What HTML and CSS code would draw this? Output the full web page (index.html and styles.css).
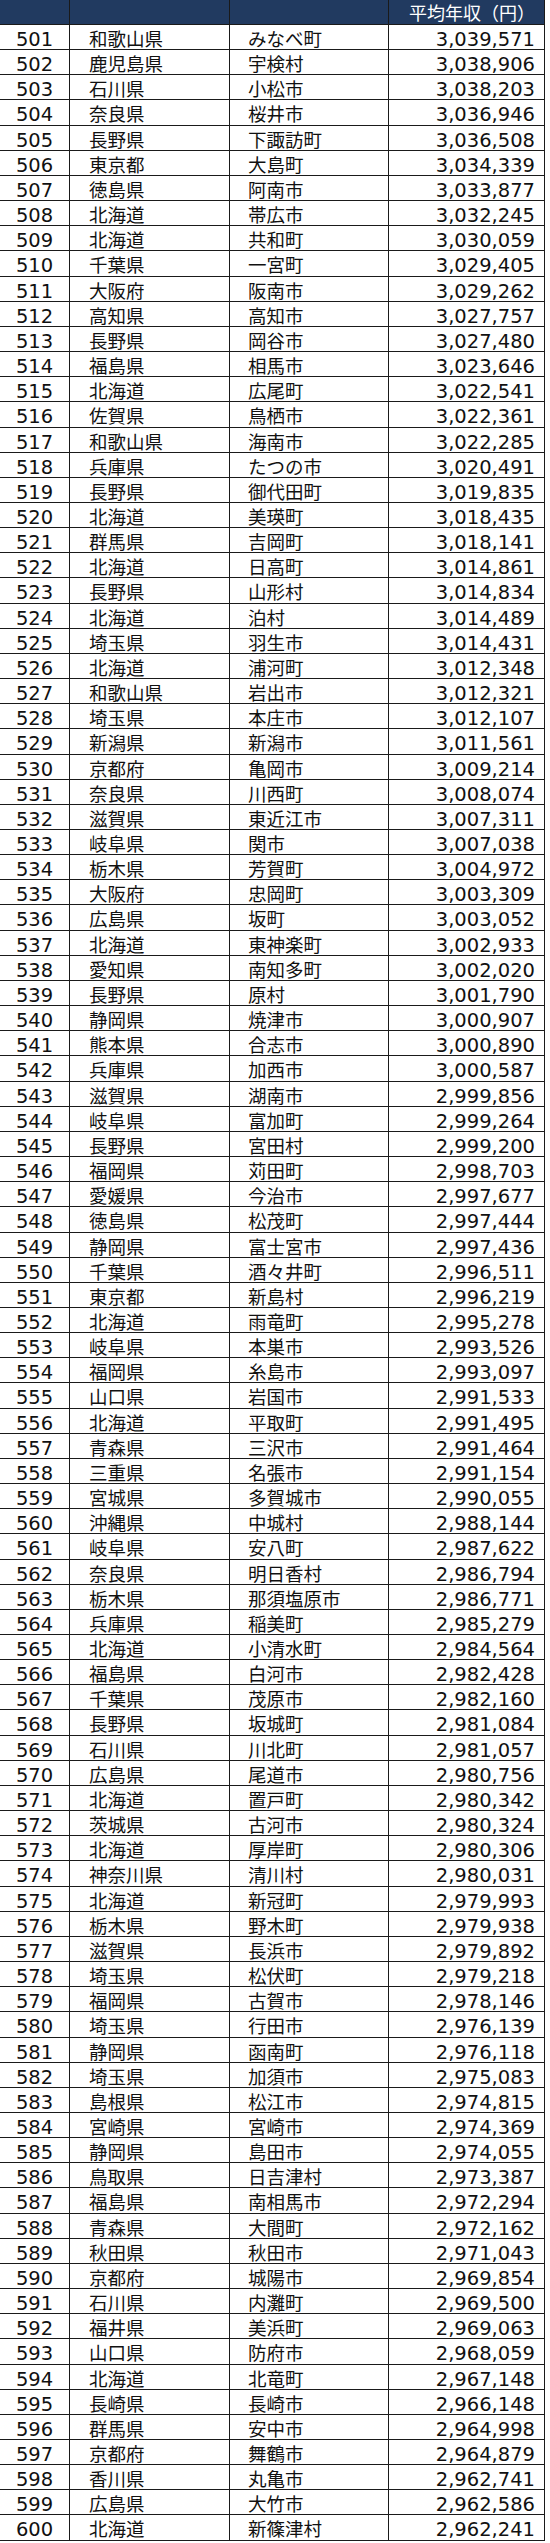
FILE: index.html
```html
<!DOCTYPE html>
<html lang="ja">
<head>
<meta charset="utf-8">
<title>平均年収ランキング 501〜600位</title>
<link rel="stylesheet" href="styles.css">
</head>
<body>
<div class="table">
<div class="row head"><span class="c rank"></span><span class="c pref"></span><span class="c city"></span><span class="c val">平均年収（円）</span></div>
<div class="row"><span class="c rank">501</span><span class="c pref">和歌山県</span><span class="c city">みなべ町</span><span class="c val">3,039,571</span></div>
<div class="row"><span class="c rank">502</span><span class="c pref">鹿児島県</span><span class="c city">宇検村</span><span class="c val">3,038,906</span></div>
<div class="row"><span class="c rank">503</span><span class="c pref">石川県</span><span class="c city">小松市</span><span class="c val">3,038,203</span></div>
<div class="row"><span class="c rank">504</span><span class="c pref">奈良県</span><span class="c city">桜井市</span><span class="c val">3,036,946</span></div>
<div class="row"><span class="c rank">505</span><span class="c pref">長野県</span><span class="c city">下諏訪町</span><span class="c val">3,036,508</span></div>
<div class="row"><span class="c rank">506</span><span class="c pref">東京都</span><span class="c city">大島町</span><span class="c val">3,034,339</span></div>
<div class="row"><span class="c rank">507</span><span class="c pref">徳島県</span><span class="c city">阿南市</span><span class="c val">3,033,877</span></div>
<div class="row"><span class="c rank">508</span><span class="c pref">北海道</span><span class="c city">帯広市</span><span class="c val">3,032,245</span></div>
<div class="row"><span class="c rank">509</span><span class="c pref">北海道</span><span class="c city">共和町</span><span class="c val">3,030,059</span></div>
<div class="row"><span class="c rank">510</span><span class="c pref">千葉県</span><span class="c city">一宮町</span><span class="c val">3,029,405</span></div>
<div class="row"><span class="c rank">511</span><span class="c pref">大阪府</span><span class="c city">阪南市</span><span class="c val">3,029,262</span></div>
<div class="row"><span class="c rank">512</span><span class="c pref">高知県</span><span class="c city">高知市</span><span class="c val">3,027,757</span></div>
<div class="row"><span class="c rank">513</span><span class="c pref">長野県</span><span class="c city">岡谷市</span><span class="c val">3,027,480</span></div>
<div class="row"><span class="c rank">514</span><span class="c pref">福島県</span><span class="c city">相馬市</span><span class="c val">3,023,646</span></div>
<div class="row"><span class="c rank">515</span><span class="c pref">北海道</span><span class="c city">広尾町</span><span class="c val">3,022,541</span></div>
<div class="row"><span class="c rank">516</span><span class="c pref">佐賀県</span><span class="c city">鳥栖市</span><span class="c val">3,022,361</span></div>
<div class="row"><span class="c rank">517</span><span class="c pref">和歌山県</span><span class="c city">海南市</span><span class="c val">3,022,285</span></div>
<div class="row"><span class="c rank">518</span><span class="c pref">兵庫県</span><span class="c city">たつの市</span><span class="c val">3,020,491</span></div>
<div class="row"><span class="c rank">519</span><span class="c pref">長野県</span><span class="c city">御代田町</span><span class="c val">3,019,835</span></div>
<div class="row"><span class="c rank">520</span><span class="c pref">北海道</span><span class="c city">美瑛町</span><span class="c val">3,018,435</span></div>
<div class="row"><span class="c rank">521</span><span class="c pref">群馬県</span><span class="c city">吉岡町</span><span class="c val">3,018,141</span></div>
<div class="row"><span class="c rank">522</span><span class="c pref">北海道</span><span class="c city">日高町</span><span class="c val">3,014,861</span></div>
<div class="row"><span class="c rank">523</span><span class="c pref">長野県</span><span class="c city">山形村</span><span class="c val">3,014,834</span></div>
<div class="row"><span class="c rank">524</span><span class="c pref">北海道</span><span class="c city">泊村</span><span class="c val">3,014,489</span></div>
<div class="row"><span class="c rank">525</span><span class="c pref">埼玉県</span><span class="c city">羽生市</span><span class="c val">3,014,431</span></div>
<div class="row"><span class="c rank">526</span><span class="c pref">北海道</span><span class="c city">浦河町</span><span class="c val">3,012,348</span></div>
<div class="row"><span class="c rank">527</span><span class="c pref">和歌山県</span><span class="c city">岩出市</span><span class="c val">3,012,321</span></div>
<div class="row"><span class="c rank">528</span><span class="c pref">埼玉県</span><span class="c city">本庄市</span><span class="c val">3,012,107</span></div>
<div class="row"><span class="c rank">529</span><span class="c pref">新潟県</span><span class="c city">新潟市</span><span class="c val">3,011,561</span></div>
<div class="row"><span class="c rank">530</span><span class="c pref">京都府</span><span class="c city">亀岡市</span><span class="c val">3,009,214</span></div>
<div class="row"><span class="c rank">531</span><span class="c pref">奈良県</span><span class="c city">川西町</span><span class="c val">3,008,074</span></div>
<div class="row"><span class="c rank">532</span><span class="c pref">滋賀県</span><span class="c city">東近江市</span><span class="c val">3,007,311</span></div>
<div class="row"><span class="c rank">533</span><span class="c pref">岐阜県</span><span class="c city">関市</span><span class="c val">3,007,038</span></div>
<div class="row"><span class="c rank">534</span><span class="c pref">栃木県</span><span class="c city">芳賀町</span><span class="c val">3,004,972</span></div>
<div class="row"><span class="c rank">535</span><span class="c pref">大阪府</span><span class="c city">忠岡町</span><span class="c val">3,003,309</span></div>
<div class="row"><span class="c rank">536</span><span class="c pref">広島県</span><span class="c city">坂町</span><span class="c val">3,003,052</span></div>
<div class="row"><span class="c rank">537</span><span class="c pref">北海道</span><span class="c city">東神楽町</span><span class="c val">3,002,933</span></div>
<div class="row"><span class="c rank">538</span><span class="c pref">愛知県</span><span class="c city">南知多町</span><span class="c val">3,002,020</span></div>
<div class="row"><span class="c rank">539</span><span class="c pref">長野県</span><span class="c city">原村</span><span class="c val">3,001,790</span></div>
<div class="row"><span class="c rank">540</span><span class="c pref">静岡県</span><span class="c city">焼津市</span><span class="c val">3,000,907</span></div>
<div class="row"><span class="c rank">541</span><span class="c pref">熊本県</span><span class="c city">合志市</span><span class="c val">3,000,890</span></div>
<div class="row"><span class="c rank">542</span><span class="c pref">兵庫県</span><span class="c city">加西市</span><span class="c val">3,000,587</span></div>
<div class="row"><span class="c rank">543</span><span class="c pref">滋賀県</span><span class="c city">湖南市</span><span class="c val">2,999,856</span></div>
<div class="row"><span class="c rank">544</span><span class="c pref">岐阜県</span><span class="c city">富加町</span><span class="c val">2,999,264</span></div>
<div class="row"><span class="c rank">545</span><span class="c pref">長野県</span><span class="c city">宮田村</span><span class="c val">2,999,200</span></div>
<div class="row"><span class="c rank">546</span><span class="c pref">福岡県</span><span class="c city">苅田町</span><span class="c val">2,998,703</span></div>
<div class="row"><span class="c rank">547</span><span class="c pref">愛媛県</span><span class="c city">今治市</span><span class="c val">2,997,677</span></div>
<div class="row"><span class="c rank">548</span><span class="c pref">徳島県</span><span class="c city">松茂町</span><span class="c val">2,997,444</span></div>
<div class="row"><span class="c rank">549</span><span class="c pref">静岡県</span><span class="c city">富士宮市</span><span class="c val">2,997,436</span></div>
<div class="row"><span class="c rank">550</span><span class="c pref">千葉県</span><span class="c city">酒々井町</span><span class="c val">2,996,511</span></div>
<div class="row"><span class="c rank">551</span><span class="c pref">東京都</span><span class="c city">新島村</span><span class="c val">2,996,219</span></div>
<div class="row"><span class="c rank">552</span><span class="c pref">北海道</span><span class="c city">雨竜町</span><span class="c val">2,995,278</span></div>
<div class="row"><span class="c rank">553</span><span class="c pref">岐阜県</span><span class="c city">本巣市</span><span class="c val">2,993,526</span></div>
<div class="row"><span class="c rank">554</span><span class="c pref">福岡県</span><span class="c city">糸島市</span><span class="c val">2,993,097</span></div>
<div class="row"><span class="c rank">555</span><span class="c pref">山口県</span><span class="c city">岩国市</span><span class="c val">2,991,533</span></div>
<div class="row"><span class="c rank">556</span><span class="c pref">北海道</span><span class="c city">平取町</span><span class="c val">2,991,495</span></div>
<div class="row"><span class="c rank">557</span><span class="c pref">青森県</span><span class="c city">三沢市</span><span class="c val">2,991,464</span></div>
<div class="row"><span class="c rank">558</span><span class="c pref">三重県</span><span class="c city">名張市</span><span class="c val">2,991,154</span></div>
<div class="row"><span class="c rank">559</span><span class="c pref">宮城県</span><span class="c city">多賀城市</span><span class="c val">2,990,055</span></div>
<div class="row"><span class="c rank">560</span><span class="c pref">沖縄県</span><span class="c city">中城村</span><span class="c val">2,988,144</span></div>
<div class="row"><span class="c rank">561</span><span class="c pref">岐阜県</span><span class="c city">安八町</span><span class="c val">2,987,622</span></div>
<div class="row"><span class="c rank">562</span><span class="c pref">奈良県</span><span class="c city">明日香村</span><span class="c val">2,986,794</span></div>
<div class="row"><span class="c rank">563</span><span class="c pref">栃木県</span><span class="c city">那須塩原市</span><span class="c val">2,986,771</span></div>
<div class="row"><span class="c rank">564</span><span class="c pref">兵庫県</span><span class="c city">稲美町</span><span class="c val">2,985,279</span></div>
<div class="row"><span class="c rank">565</span><span class="c pref">北海道</span><span class="c city">小清水町</span><span class="c val">2,984,564</span></div>
<div class="row"><span class="c rank">566</span><span class="c pref">福島県</span><span class="c city">白河市</span><span class="c val">2,982,428</span></div>
<div class="row"><span class="c rank">567</span><span class="c pref">千葉県</span><span class="c city">茂原市</span><span class="c val">2,982,160</span></div>
<div class="row"><span class="c rank">568</span><span class="c pref">長野県</span><span class="c city">坂城町</span><span class="c val">2,981,084</span></div>
<div class="row"><span class="c rank">569</span><span class="c pref">石川県</span><span class="c city">川北町</span><span class="c val">2,981,057</span></div>
<div class="row"><span class="c rank">570</span><span class="c pref">広島県</span><span class="c city">尾道市</span><span class="c val">2,980,756</span></div>
<div class="row"><span class="c rank">571</span><span class="c pref">北海道</span><span class="c city">置戸町</span><span class="c val">2,980,342</span></div>
<div class="row"><span class="c rank">572</span><span class="c pref">茨城県</span><span class="c city">古河市</span><span class="c val">2,980,324</span></div>
<div class="row"><span class="c rank">573</span><span class="c pref">北海道</span><span class="c city">厚岸町</span><span class="c val">2,980,306</span></div>
<div class="row"><span class="c rank">574</span><span class="c pref">神奈川県</span><span class="c city">清川村</span><span class="c val">2,980,031</span></div>
<div class="row"><span class="c rank">575</span><span class="c pref">北海道</span><span class="c city">新冠町</span><span class="c val">2,979,993</span></div>
<div class="row"><span class="c rank">576</span><span class="c pref">栃木県</span><span class="c city">野木町</span><span class="c val">2,979,938</span></div>
<div class="row"><span class="c rank">577</span><span class="c pref">滋賀県</span><span class="c city">長浜市</span><span class="c val">2,979,892</span></div>
<div class="row"><span class="c rank">578</span><span class="c pref">埼玉県</span><span class="c city">松伏町</span><span class="c val">2,979,218</span></div>
<div class="row"><span class="c rank">579</span><span class="c pref">福岡県</span><span class="c city">古賀市</span><span class="c val">2,978,146</span></div>
<div class="row"><span class="c rank">580</span><span class="c pref">埼玉県</span><span class="c city">行田市</span><span class="c val">2,976,139</span></div>
<div class="row"><span class="c rank">581</span><span class="c pref">静岡県</span><span class="c city">函南町</span><span class="c val">2,976,118</span></div>
<div class="row"><span class="c rank">582</span><span class="c pref">埼玉県</span><span class="c city">加須市</span><span class="c val">2,975,083</span></div>
<div class="row"><span class="c rank">583</span><span class="c pref">島根県</span><span class="c city">松江市</span><span class="c val">2,974,815</span></div>
<div class="row"><span class="c rank">584</span><span class="c pref">宮崎県</span><span class="c city">宮崎市</span><span class="c val">2,974,369</span></div>
<div class="row"><span class="c rank">585</span><span class="c pref">静岡県</span><span class="c city">島田市</span><span class="c val">2,974,055</span></div>
<div class="row"><span class="c rank">586</span><span class="c pref">鳥取県</span><span class="c city">日吉津村</span><span class="c val">2,973,387</span></div>
<div class="row"><span class="c rank">587</span><span class="c pref">福島県</span><span class="c city">南相馬市</span><span class="c val">2,972,294</span></div>
<div class="row"><span class="c rank">588</span><span class="c pref">青森県</span><span class="c city">大間町</span><span class="c val">2,972,162</span></div>
<div class="row"><span class="c rank">589</span><span class="c pref">秋田県</span><span class="c city">秋田市</span><span class="c val">2,971,043</span></div>
<div class="row"><span class="c rank">590</span><span class="c pref">京都府</span><span class="c city">城陽市</span><span class="c val">2,969,854</span></div>
<div class="row"><span class="c rank">591</span><span class="c pref">石川県</span><span class="c city">内灘町</span><span class="c val">2,969,500</span></div>
<div class="row"><span class="c rank">592</span><span class="c pref">福井県</span><span class="c city">美浜町</span><span class="c val">2,969,063</span></div>
<div class="row"><span class="c rank">593</span><span class="c pref">山口県</span><span class="c city">防府市</span><span class="c val">2,968,059</span></div>
<div class="row"><span class="c rank">594</span><span class="c pref">北海道</span><span class="c city">北竜町</span><span class="c val">2,967,148</span></div>
<div class="row"><span class="c rank">595</span><span class="c pref">長崎県</span><span class="c city">長崎市</span><span class="c val">2,966,148</span></div>
<div class="row"><span class="c rank">596</span><span class="c pref">群馬県</span><span class="c city">安中市</span><span class="c val">2,964,998</span></div>
<div class="row"><span class="c rank">597</span><span class="c pref">京都府</span><span class="c city">舞鶴市</span><span class="c val">2,964,879</span></div>
<div class="row"><span class="c rank">598</span><span class="c pref">香川県</span><span class="c city">丸亀市</span><span class="c val">2,962,741</span></div>
<div class="row"><span class="c rank">599</span><span class="c pref">広島県</span><span class="c city">大竹市</span><span class="c val">2,962,586</span></div>
<div class="row"><span class="c rank">600</span><span class="c pref">北海道</span><span class="c city">新篠津村</span><span class="c val">2,962,241</span></div>
</div>
</body>
</html>
```

FILE: styles.css
```css
html, body {
  margin: 0;
  padding: 0;
  background: #ffffff;
}

body {
  font-family: "DejaVu Sans", "Noto Sans CJK JP", sans-serif;
  color: #111111;
}

.table {
  width: 545px;
  display: flex;
  flex-direction: column;
}

.row {
  display: grid;
  grid-template-columns: 70px 160px 159px 156px;
  grid-template-rows: 24.16px;
  height: 25.16px;
  box-sizing: border-box;
  border-bottom: 1px solid #1a1a1a;
}

.row.head {
  grid-template-rows: 24px;
  height: 25px;
  background: #213a60;
  color: #ffffff;
}

.c {
  border-right: 1px solid #1a1a1a;
  box-sizing: border-box;
  white-space: nowrap;
  line-height: 19px;
  padding-top: 5px;
}

.rank {
  text-align: center;
  font-size: 19.5px;
}

.pref {
  padding-left: 19px;
  font-size: 18.5px;
}

.city {
  padding-left: 18px;
  font-size: 18.5px;
}

.val {
  text-align: right;
  padding-right: 9px;
  font-size: 19.5px;
}

.head .c {
  line-height: 24px;
  padding-top: 0;
}

.head .val {
  font-family: "Noto Sans CJK JP", sans-serif;
  font-size: 18px;
  padding-right: 9px;
}
```
